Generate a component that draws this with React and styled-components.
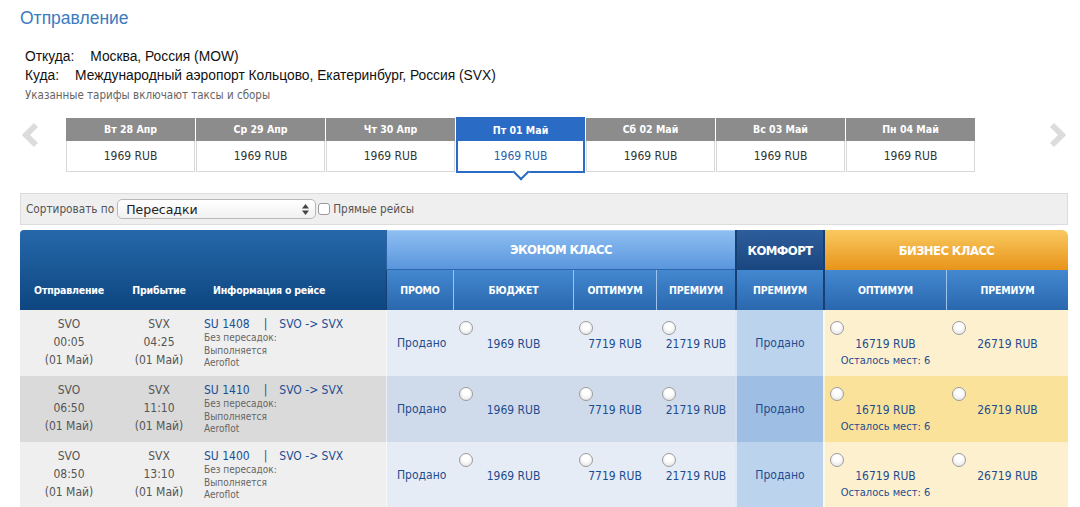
import React from 'react';
import styled, { createGlobalStyle, css } from 'styled-components';

const TAHOMA = `"DejaVu Sans Condensed", "Liberation Sans", Arial, sans-serif`;
const SANS = `"Liberation Sans", Arial, sans-serif`;

const Global = createGlobalStyle`
  html, body { margin: 0; padding: 0; background: #fff; }
  body { font-family: ${SANS}; color: #222; width: 1080px; height: 507px; overflow: hidden; }
  * { box-sizing: border-box; }
`;

const Page = styled.div`
  padding-top: 8px;
`;

const Title = styled.h1`
  margin: 0 0 0 20px;
  font: 400 17.5px/20px ${SANS};
  color: #3b7bbf;
`;

const Route = styled.div`
  margin: 19px 0 0 25px;
  font: 13.8px/19px ${SANS};
  color: #111;
`;

const RouteLabel = styled.span`
  margin-right: 16px;
`;

const Note = styled.div`
  margin-top: 2px;
  font: 11.5px/16px ${TAHOMA};
  color: #666;
`;

const DateStrip = styled.div`
  display: flex;
  align-items: flex-start;
  margin: 14px 12px 0 20px;
  height: 56px;
`;

const ArrowBox = styled.div`
  width: 46px;
  padding: 5px 2px 0;
  display: flex;
  justify-content: ${p => (p.$right ? 'flex-end' : 'flex-start')};
  ${p => p.$right && 'margin-left: auto;'}
`;

const Tabs = styled.div`
  display: flex;
  gap: 1px;
`;

const Tab = styled.div`
  position: relative;
  width: 129px;
  margin-top: 1px;
  text-align: center;
  background: #fff;
  ${p => p.$active && css`
    margin-top: 0;
    border: 2px solid #2a6cc5;
    &::after {
      content: '';
      position: absolute;
      left: 50%;
      bottom: -7px;
      width: 10px;
      height: 10px;
      background: #fff;
      border-right: 2px solid #2a6cc5;
      border-bottom: 2px solid #2a6cc5;
      transform: translateX(-50%) rotate(45deg);
    }
  `}
`;

const TabHead = styled.div`
  height: ${p => (p.$active ? 22 : 23)}px;
  background: ${p => (p.$active ? '#2a6cc5' : '#8c8c8c')};
  color: #fff;
  font: bold 10.5px/${p => (p.$active ? 22 : 23)}px ${TAHOMA};
`;

const TabBody = styled.div`
  height: ${p => (p.$active ? 30 : 31)}px;
  border: ${p => (p.$active ? 'none' : '1px solid #d8d8d8')};
  border-top: none;
  font: 12px/30px ${TAHOMA};
  color: ${p => (p.$active ? '#2a5fae' : '#333')};
`;

const SortBar = styled.div`
  display: flex;
  align-items: center;
  width: 1048px;
  height: 32px;
  margin: 20px 0 0 20px;
  padding-left: 5px;
  border: 1px solid #dcdcdc;
  background: #efefef;
  font: 11.7px ${TAHOMA};
  color: #555;
`;

const Select = styled.div`
  display: flex;
  align-items: center;
  width: 199px;
  height: 20px;
  margin-left: 3px;
  padding-left: 8px;
  border: 1px solid #b8b8b8;
  border-radius: 5px;
  background: linear-gradient(#ffffff, #f1f1f1);
  font: 12.5px "DejaVu Sans", ${SANS};
  color: #222;
`;

const SelectArrows = styled.svg`
  margin-left: auto;
  margin-right: 6px;
`;

const CheckBox = styled.span`
  width: 12px;
  height: 12px;
  margin: 0 3px 0 2px;
  border: 1px solid #9a9a9a;
  border-radius: 3px;
  background: #fff;
`;

const Table = styled.div`
  display: grid;
  grid-template-columns: 98px 82px 186px 67px 120px 83px 79px 88px 123px 122px;
  grid-template-rows: 40px 40px repeat(3, 66px);
  width: 1048px;
  margin: 5px 0 0 20px;
`;

const FlightHead = styled.div`
  grid-row: 1 / span 2;
  display: flex;
  align-items: center;
  justify-content: ${p => (p.$left ? 'flex-start' : 'center')};
  padding: 40px 0 0 ${p => (p.$left ? 13 : 0)}px;
  background: linear-gradient(#2668aa, #0d4680);
  color: #fff;
  font: bold 10.5px ${TAHOMA};
  letter-spacing: -0.2px;
  ${p => p.$first && 'border-top-left-radius: 4px;'}
`;

const classBg = {
  econ: css`
    background: linear-gradient(#8fbff2, #5a96dd);
    border-left: 1px solid #2d63a2;
    border-bottom: 1px solid #2f66a6;
    box-shadow: inset 0 1px 0 #a9d0f7;
  `,
  comfort: css`
    background: linear-gradient(#2d5e9c, #1a467e);
    border-left: 2px solid #163f73;
  `,
  biz: css`
    background: linear-gradient(#f9c960, #e8941a);
    border-left: 2px solid #163f73;
    border-top-right-radius: 6px;
  `,
};

const ClassHead = styled.div`
  grid-column: span ${p => p.$span};
  display: flex;
  align-items: center;
  justify-content: center;
  color: #fff;
  font: bold 13px ${TAHOMA};
  letter-spacing: -0.6px;
  ${p => classBg[p.$kind]}
`;

const SubHead = styled.div`
  display: flex;
  align-items: center;
  justify-content: center;
  background: linear-gradient(#4388d0, #2a68ae);
  border-left: ${p => p.$bw}px solid ${p => p.$bc};
  color: #fff;
  font: bold 10.5px ${TAHOMA};
  letter-spacing: -0.2px;
`;

const rowBg = {
  flight: ['#efefef', '#dadada'],
  econ: ['#e5ecf6', '#cfdbeb'],
  comfort: ['#bcd3ee', '#9ebee3'],
  biz: ['#fdf0cf', '#fae29b'],
};

const Cell = styled.div`
  background: ${p => rowBg[p.$group][p.$alt ? 1 : 0]};
  border-left: ${p => p.$bw || 0}px solid ${p => p.$bc || 'transparent'};
`;

const PortCell = styled(Cell)`
  padding-top: 5px;
  text-align: center;
  font: 12px/18px ${TAHOMA};
  color: #555;
`;

const InfoCell = styled(Cell)`
  padding: 6px 4px 0;
`;

const FlightNo = styled.div`
  font: 12px/16px ${TAHOMA};
  color: #1c4e94;
  white-space: pre;
`;

const Pipe = styled.span`
  margin: 0 12px 0 14px;
`;

const InfoLine = styled.div`
  font: 10px/12.5px ${TAHOMA};
  color: #666;
`;

const SoldCell = styled(Cell)`
  display: flex;
  align-items: center;
  justify-content: ${p => (p.$center ? 'center' : 'flex-start')};
  padding-left: ${p => (p.$center ? 0 : 10)}px;
  font: 12px ${TAHOMA};
  color: #1d4d8f;
`;

const PriceCell = styled(Cell)`
  display: flex;
  flex-direction: column;
  padding-top: 11px;
`;

const Radio = styled.span`
  width: 14px;
  height: 14px;
  margin-left: 5px;
  border: 1px solid #9c9c9c;
  border-radius: 50%;
  background: radial-gradient(circle at 50% 35%, #ffffff 30%, #dedede 100%);
`;

const Price = styled.div`
  margin-top: 2px;
  text-align: center;
  font: 12px/14px ${TAHOMA};
  color: #1d4d8f;
`;

const Seats = styled.div`
  margin-top: 3px;
  text-align: center;
  font: 11px/14px ${TAHOMA};
  color: #1d4d8f;
`;

const Chevron = ({ right }) => (
  <svg width="18" height="26" viewBox="0 0 18 26">
    <polyline
      points={right ? '4,3 14,13 4,23' : '14,3 4,13 14,23'}
      fill="none"
      stroke="#dcdcdc"
      strokeWidth="6"
      strokeLinejoin="miter"
    />
  </svg>
);

const dates = [
  ['Вт 28 Апр', '1969 RUB'],
  ['Ср 29 Апр', '1969 RUB'],
  ['Чт 30 Апр', '1969 RUB'],
  ['Пт 01 Май', '1969 RUB', true],
  ['Сб 02 Май', '1969 RUB'],
  ['Вс 03 Май', '1969 RUB'],
  ['Пн 04 Май', '1969 RUB'],
];

const flights = [
  { no: 'SU 1408', dep: '00:05', arr: '04:25' },
  { no: 'SU 1410', dep: '06:50', arr: '11:10', alt: true },
  { no: 'SU 1400', dep: '08:50', arr: '13:10' },
];

const LIGHT = '#9cc3ec';
const DARK = '#163f73';

export default function App() {
  return (
    <Page>
      <Global />
      <Title>Отправление</Title>
      <Route>
        <div><RouteLabel>Откуда:</RouteLabel>Москва, Россия (MOW)</div>
        <div><RouteLabel>Куда:</RouteLabel>Международный аэропорт Кольцово, Екатеринбург, Россия (SVX)</div>
        <Note>Указанные тарифы включают таксы и сборы</Note>
      </Route>

      <DateStrip>
        <ArrowBox><Chevron /></ArrowBox>
        <Tabs>
          {dates.map(([d, p, a]) => (
            <Tab key={d} $active={a}>
              <TabHead $active={a}>{d}</TabHead>
              <TabBody $active={a}>{p}</TabBody>
            </Tab>
          ))}
        </Tabs>
        <ArrowBox $right><Chevron right /></ArrowBox>
      </DateStrip>

      <SortBar>
        Сортировать по
        <Select>
          Пересадки
          <SelectArrows width="7" height="11" viewBox="0 0 7 11">
            <polygon points="0,4.5 3.5,0 7,4.5" fill="#444" />
            <polygon points="0,6.5 3.5,11 7,6.5" fill="#444" />
          </SelectArrows>
        </Select>
        <CheckBox />
        Прямые рейсы
      </SortBar>

      <Table>
        <FlightHead $first>Отправление</FlightHead>
        <FlightHead>Прибытие</FlightHead>
        <FlightHead $left>Информация о рейсе</FlightHead>
        <ClassHead $span={4} $kind="econ">ЭКОНОМ КЛАСС</ClassHead>
        <ClassHead $span={1} $kind="comfort">КОМФОРТ</ClassHead>
        <ClassHead $span={2} $kind="biz">БИЗНЕС КЛАСС</ClassHead>

        <SubHead $bw={1} $bc={DARK}>ПРОМО</SubHead>
        <SubHead $bw={1} $bc={LIGHT}>БЮДЖЕТ</SubHead>
        <SubHead $bw={1} $bc={LIGHT}>ОПТИМУМ</SubHead>
        <SubHead $bw={1} $bc={LIGHT}>ПРЕМИУМ</SubHead>
        <SubHead $bw={2} $bc={DARK}>ПРЕМИУМ</SubHead>
        <SubHead $bw={2} $bc={DARK}>ОПТИМУМ</SubHead>
        <SubHead $bw={1} $bc={LIGHT}>ПРЕМИУМ</SubHead>

        {flights.map(f => (
          <React.Fragment key={f.no}>
            <PortCell $group="flight" $alt={f.alt}>
              SVO<br />{f.dep}<br />(01 Май)
            </PortCell>
            <PortCell $group="flight" $alt={f.alt}>
              SVX<br />{f.arr}<br />(01 Май)
            </PortCell>
            <InfoCell $group="flight" $alt={f.alt}>
              <FlightNo>{f.no}<Pipe>|</Pipe>SVO -&gt; SVX</FlightNo>
              <InfoLine>Без пересадок:</InfoLine>
              <InfoLine>Выполняется</InfoLine>
              <InfoLine>Aeroflot</InfoLine>
            </InfoCell>
            <SoldCell $group="econ" $alt={f.alt} $bw={1} $bc="rgba(255,255,255,0.6)">Продано</SoldCell>
            <PriceCell $group="econ" $alt={f.alt} $bw={1}>
              <Radio />
              <Price>1969 RUB</Price>
            </PriceCell>
            <PriceCell $group="econ" $alt={f.alt} $bw={1}>
              <Radio />
              <Price>7719 RUB</Price>
            </PriceCell>
            <PriceCell $group="econ" $alt={f.alt} $bw={1}>
              <Radio />
              <Price>21719 RUB</Price>
            </PriceCell>
            <SoldCell $group="comfort" $alt={f.alt} $bw={2} $bc="rgba(255,255,255,0.5)" $center>Продано</SoldCell>
            <PriceCell $group="biz" $alt={f.alt} $bw={2} $bc="rgba(255,255,255,0.5)">
              <Radio />
              <Price>16719 RUB</Price>
              <Seats>Осталось мест: 6</Seats>
            </PriceCell>
            <PriceCell $group="biz" $alt={f.alt} $bw={1}>
              <Radio />
              <Price>26719 RUB</Price>
            </PriceCell>
          </React.Fragment>
        ))}
      </Table>
    </Page>
  );
}
